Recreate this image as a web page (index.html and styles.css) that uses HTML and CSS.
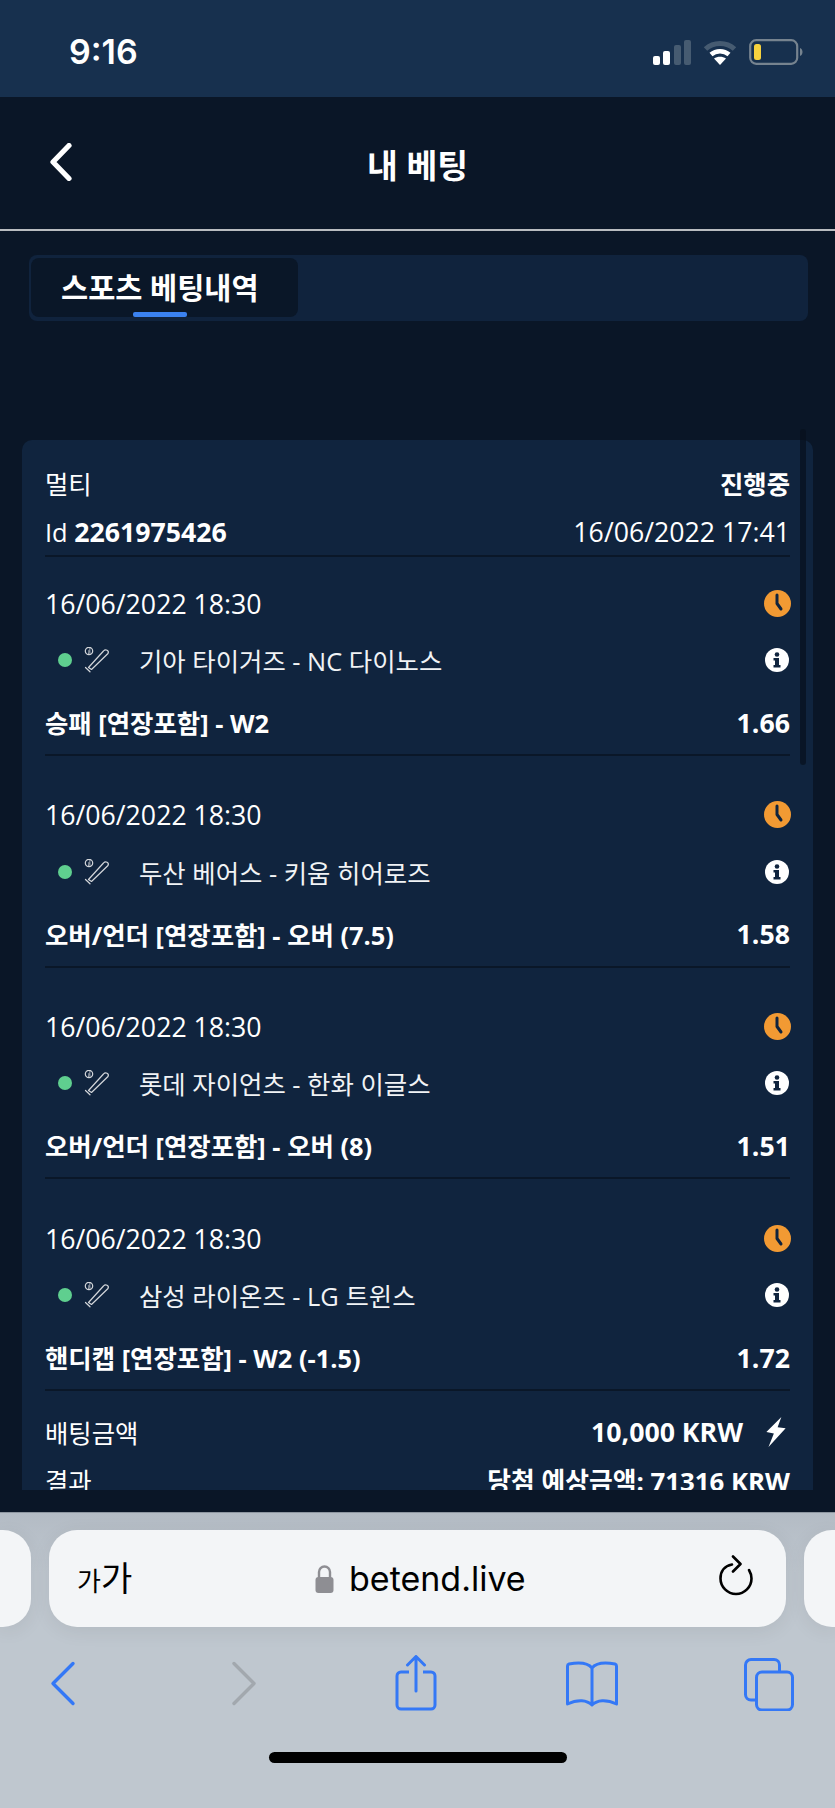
FILE: index.html
```html
<!DOCTYPE html>
<html lang="ko">
<head>
    <meta charset="UTF-8">
    <meta name="viewport" content="width=device-width, initial-scale=1.0">
    <title>내 베팅</title>
    <link rel="stylesheet" href="styles.css">
</head>
<body>
<div class="phone">

    <!-- Status bar -->
    <div class="status-bar">
        <span class="clock">9:16</span>
        <div class="status-icons">
            <svg class="signal" width="38" height="25" viewBox="0 0 38 25">
                <rect x="0" y="16" width="7" height="9" rx="2" fill="#fff"/>
                <rect x="10" y="11" width="7" height="14" rx="2" fill="#fff"/>
                <rect x="21" y="5" width="7" height="20" rx="2" fill="#465b71"/>
                <rect x="31" y="0" width="7" height="25" rx="2" fill="#465b71"/>
            </svg>
            <svg class="wifi" width="34" height="25" viewBox="0 0 34 25">
                <path d="M2.5 9 C10.5 1.5 23.5 1.5 31.5 9" fill="none" stroke="#465b71" stroke-width="5"/>
                <path d="M8 14.5 C13 10 21 10 26 14.5" fill="none" stroke="#fff" stroke-width="4.5"/>
                <path d="M17 25 L11 18.5 C14.5 16 19.5 16 23 18.5 Z" fill="#fff"/>
            </svg>
            <svg class="battery" width="54" height="26" viewBox="0 0 54 26">
                <rect x="1.2" y="1.2" width="47" height="23.6" rx="6" fill="none" stroke="#76838f" stroke-width="2.2"/>
                <rect x="5" y="5" width="7" height="16" rx="2.5" fill="#f7d23e"/>
                <path d="M51 9 C53 10 53.5 11.5 53.5 13 C53.5 14.5 53 16 51 17 Z" fill="#76838f"/>
            </svg>
        </div>
    </div>

    <!-- Header -->
    <div class="top-bar">
        <svg class="back-btn" width="24" height="38" viewBox="0 0 24 38">
            <path d="M20 2.5 L4 19 L20 35.5" fill="none" stroke="#fff" stroke-width="5.2" stroke-linecap="round" stroke-linejoin="round"/>
        </svg>
        <h1>내 베팅</h1>
    </div>

    <div class="content">
        <div class="tabs">
            <div class="tab">스포츠 베팅내역</div>
        </div>

        <div class="scroll-area">
            <div class="scrollbar"></div>
            <div class="card">
                <div class="row">
                    <span>멀티</span>
                    <b>진행중</b>
                </div>
                <div class="row row-id">
                    <span>Id <b class="num">2261975426</b></span>
                    <span class="num">16/06/2022 17:41</span>
                </div>

                <div class="bet">
                    <div class="row">
                        <span class="num">16/06/2022 18:30</span>
                        <svg class="ico-clock" width="27" height="27" viewBox="0 0 27 27"><circle cx="13.5" cy="13.5" r="13.5" fill="#f29a33"/><path d="M13 5 L13 13.5 L17 19" fill="none" stroke="#10243e" stroke-width="3" stroke-linecap="round" stroke-linejoin="round"/></svg>
                    </div>
                    <div class="row row-team">
                        <span class="dot"></span>
                        <svg class="bat" width="27" height="26" viewBox="0 0 27 26"><circle cx="5" cy="4" r="3.7" fill="none" stroke="#d3d6da" stroke-width="1.2"/><path d="M4 4 C5 3 5 5 4.5 7 M6 1 C5.5 3 6 5 6 7" fill="none" stroke="#d3d6da" stroke-width=".8"/><path d="M4.5 20.5 L19.5 4 C21.5 1.5 25.5 3.5 24 6.5 L7.5 22.5 Z M1.5 20.5 L6 24.8" fill="none" stroke="#d3d6da" stroke-width="1.2" stroke-linejoin="round" stroke-linecap="round"/></svg>
                        <span class="team">기아 타이거즈 - NC 다이노스</span>
                        <svg class="ico-info" width="24" height="24" viewBox="0 0 24 24"><circle cx="12" cy="12" r="12" fill="#fff"/><circle cx="12" cy="6.5" r="2.3" fill="#10243e"/><path d="M8.5 10 H14 V17 H15.5 V19.5 H8.5 V17 H10 V12.5 H8.5 Z" fill="#10243e"/></svg>
                    </div>
                    <div class="row row-market">
                        <b>승패 [연장포함] - W2</b>
                        <b class="num">1.66</b>
                    </div>
                </div>

                <div class="bet">
                    <div class="row">
                        <span class="num">16/06/2022 18:30</span>
                        <svg class="ico-clock" width="27" height="27" viewBox="0 0 27 27"><circle cx="13.5" cy="13.5" r="13.5" fill="#f29a33"/><path d="M13 5 L13 13.5 L17 19" fill="none" stroke="#10243e" stroke-width="3" stroke-linecap="round" stroke-linejoin="round"/></svg>
                    </div>
                    <div class="row row-team">
                        <span class="dot"></span>
                        <svg class="bat" width="27" height="26" viewBox="0 0 27 26"><circle cx="5" cy="4" r="3.7" fill="none" stroke="#d3d6da" stroke-width="1.2"/><path d="M4 4 C5 3 5 5 4.5 7 M6 1 C5.5 3 6 5 6 7" fill="none" stroke="#d3d6da" stroke-width=".8"/><path d="M4.5 20.5 L19.5 4 C21.5 1.5 25.5 3.5 24 6.5 L7.5 22.5 Z M1.5 20.5 L6 24.8" fill="none" stroke="#d3d6da" stroke-width="1.2" stroke-linejoin="round" stroke-linecap="round"/></svg>
                        <span class="team">두산 베어스 - 키움 히어로즈</span>
                        <svg class="ico-info" width="24" height="24" viewBox="0 0 24 24"><circle cx="12" cy="12" r="12" fill="#fff"/><circle cx="12" cy="6.5" r="2.3" fill="#10243e"/><path d="M8.5 10 H14 V17 H15.5 V19.5 H8.5 V17 H10 V12.5 H8.5 Z" fill="#10243e"/></svg>
                    </div>
                    <div class="row row-market">
                        <b>오버/언더 [연장포함] - 오버 (7.5)</b>
                        <b class="num">1.58</b>
                    </div>
                </div>

                <div class="bet">
                    <div class="row">
                        <span class="num">16/06/2022 18:30</span>
                        <svg class="ico-clock" width="27" height="27" viewBox="0 0 27 27"><circle cx="13.5" cy="13.5" r="13.5" fill="#f29a33"/><path d="M13 5 L13 13.5 L17 19" fill="none" stroke="#10243e" stroke-width="3" stroke-linecap="round" stroke-linejoin="round"/></svg>
                    </div>
                    <div class="row row-team">
                        <span class="dot"></span>
                        <svg class="bat" width="27" height="26" viewBox="0 0 27 26"><circle cx="5" cy="4" r="3.7" fill="none" stroke="#d3d6da" stroke-width="1.2"/><path d="M4 4 C5 3 5 5 4.5 7 M6 1 C5.5 3 6 5 6 7" fill="none" stroke="#d3d6da" stroke-width=".8"/><path d="M4.5 20.5 L19.5 4 C21.5 1.5 25.5 3.5 24 6.5 L7.5 22.5 Z M1.5 20.5 L6 24.8" fill="none" stroke="#d3d6da" stroke-width="1.2" stroke-linejoin="round" stroke-linecap="round"/></svg>
                        <span class="team">롯데 자이언츠 - 한화 이글스</span>
                        <svg class="ico-info" width="24" height="24" viewBox="0 0 24 24"><circle cx="12" cy="12" r="12" fill="#fff"/><circle cx="12" cy="6.5" r="2.3" fill="#10243e"/><path d="M8.5 10 H14 V17 H15.5 V19.5 H8.5 V17 H10 V12.5 H8.5 Z" fill="#10243e"/></svg>
                    </div>
                    <div class="row row-market">
                        <b>오버/언더 [연장포함] - 오버 (8)</b>
                        <b class="num">1.51</b>
                    </div>
                </div>

                <div class="bet">
                    <div class="row">
                        <span class="num">16/06/2022 18:30</span>
                        <svg class="ico-clock" width="27" height="27" viewBox="0 0 27 27"><circle cx="13.5" cy="13.5" r="13.5" fill="#f29a33"/><path d="M13 5 L13 13.5 L17 19" fill="none" stroke="#10243e" stroke-width="3" stroke-linecap="round" stroke-linejoin="round"/></svg>
                    </div>
                    <div class="row row-team">
                        <span class="dot"></span>
                        <svg class="bat" width="27" height="26" viewBox="0 0 27 26"><circle cx="5" cy="4" r="3.7" fill="none" stroke="#d3d6da" stroke-width="1.2"/><path d="M4 4 C5 3 5 5 4.5 7 M6 1 C5.5 3 6 5 6 7" fill="none" stroke="#d3d6da" stroke-width=".8"/><path d="M4.5 20.5 L19.5 4 C21.5 1.5 25.5 3.5 24 6.5 L7.5 22.5 Z M1.5 20.5 L6 24.8" fill="none" stroke="#d3d6da" stroke-width="1.2" stroke-linejoin="round" stroke-linecap="round"/></svg>
                        <span class="team">삼성 라이온즈 - LG 트윈스</span>
                        <svg class="ico-info" width="24" height="24" viewBox="0 0 24 24"><circle cx="12" cy="12" r="12" fill="#fff"/><circle cx="12" cy="6.5" r="2.3" fill="#10243e"/><path d="M8.5 10 H14 V17 H15.5 V19.5 H8.5 V17 H10 V12.5 H8.5 Z" fill="#10243e"/></svg>
                    </div>
                    <div class="row row-market">
                        <b>핸디캡 [연장포함] - W2 (-1.5)</b>
                        <b class="num">1.72</b>
                    </div>
                </div>

                <div class="summary">
                    <div class="row">
                        <span>배팅금액</span>
                        <b class="stake num">10,000 KRW
                            <svg width="22" height="30" viewBox="0 0 20 28"><path d="M15 0 L1 14 L8 15.5 L3 28 L19 10.5 L11.5 9.5 Z" fill="#fff"/></svg>
                        </b>
                    </div>
                    <div class="row">
                        <span>결과</span>
                        <b class="payout">당첨 예상금액: 71316 KRW</b>
                    </div>
                </div>
            </div>
        </div>
    </div>

    <!-- Safari toolbar -->
    <div class="browser">
        <div class="url-row">
            <div class="url-side url-left"></div>
            <div class="url-bar">
                <span class="aa"><small>가</small>가</span>
                <span class="address">
                    <svg width="19" height="28" viewBox="0 0 19 28"><path d="M4 13 V7 a5.5 5.5 0 0 1 11 0 V13" fill="none" stroke="#8e8e93" stroke-width="2.4"/><rect x="0.5" y="12" width="18" height="16" rx="3" fill="#8e8e93"/></svg>
                    betend.live
                </span>
                <svg class="reload" width="34" height="41" viewBox="0 0 34 41"><path d="M13 9.5 C5 11 1.5 17 1.5 23.5 C1.5 32 8.5 39 17 39 C25.5 39 32.5 32 32.5 23.5 C32.5 20 31.5 17.5 30 15" fill="none" stroke="#000" stroke-width="2.6" stroke-linecap="round"/><path d="M14 1.5 L21.5 9 L14 16.5" fill="none" stroke="#000" stroke-width="2.6" stroke-linecap="round" stroke-linejoin="round"/></svg>
            </div>
            <div class="url-side url-right"></div>
        </div>
        <div class="toolbar">
            <svg width="50" height="56" viewBox="0 0 50 56"><path d="M34 8.5 L14 28.5 L34 48.5" fill="none" stroke="#3478f6" stroke-width="3.4" stroke-linecap="round" stroke-linejoin="round"/></svg>
            <svg width="50" height="56" viewBox="0 0 50 56"><path d="M19 8.5 L39 28.5 L19 48.5" fill="none" stroke="#a2a8ae" stroke-width="3.4" stroke-linecap="round" stroke-linejoin="round"/></svg>
            <svg width="50" height="56" viewBox="0 0 50 56"><path d="M18 17 H10 a4 4 0 0 0 -4 4 V50 a4 4 0 0 0 4 4 H40 a4 4 0 0 0 4 -4 V21 a4 4 0 0 0 -4 -4 H32" fill="none" stroke="#3478f6" stroke-width="3"/><path d="M25 36 V2 M16.5 10 L25 1.5 L33.5 10" fill="none" stroke="#3478f6" stroke-width="3" stroke-linecap="round" stroke-linejoin="round"/></svg>
            <svg width="52" height="56" viewBox="0 0 52 56"><path d="M26 13 C22 8 14 7 3 9 C1.8 9.3 1.5 10 1.5 11 V49 C12 44 21 45 26 50 C31 45 40 44 50.5 49 V11 C50.5 10 50.2 9.3 49 9 C38 7 30 8 26 13 Z M26 13 V50" fill="none" stroke="#3478f6" stroke-width="3" stroke-linejoin="round"/></svg>
            <svg width="50" height="56" viewBox="0 0 50 56"><rect x="12.5" y="17" width="36" height="38" rx="5.5" fill="none" stroke="#3478f6" stroke-width="3"/><path d="M12 45 H7 a5.5 5.5 0 0 1 -5.5 -5.5 V10 a5.5 5.5 0 0 1 5.5 -5.5 H30 a5.5 5.5 0 0 1 5.5 5.5 V17" fill="none" stroke="#3478f6" stroke-width="3"/></svg>
        </div>
        <div class="home-bar"></div>
    </div>
</div>
</body>
</html>
```

FILE: styles.css
```css
html, body {
    margin: 0;
    padding: 0;
}

body {
    font-family: "Open Sans", "Noto Sans CJK KR", sans-serif;
    background-color: #0a1627;
    color: #fff;
}

b {
    font-weight: 700;
}

.phone {
    width: 835px;
    height: 1808px;
    display: flex;
    flex-direction: column;
    overflow: hidden;
}

/* Status bar */
.status-bar {
    height: 97px;
    flex: none;
    display: flex;
    align-items: flex-start;
    justify-content: space-between;
    background-color: #17304e;
}

.clock {
    font-family: Inter, sans-serif;
    font-size: 34px;
    font-weight: 600;
    line-height: 40px;
    margin: 32px 0 0 69px;
}

.status-icons {
    display: flex;
    align-items: center;
    gap: 12px;
    margin: 39px 32px 0 0;
}

/* Header */
.top-bar {
    height: 132px;
    flex: none;
    display: flex;
    align-items: center;
    justify-content: center;
    position: relative;
    background-color: #0a1627;
    border-bottom: 2px solid #b9bcc0;
}

.top-bar h1 {
    margin: 0;
    font-size: 33.5px;
    font-weight: 700;
}

.back-btn {
    position: absolute;
    left: 49px;
    top: 46px;
}

.content {
    flex: 1;
    min-height: 0;
    display: flex;
    flex-direction: column;
    background-color: #0a1627;
    padding-bottom: 22px;
}

/* Tabs */
.tabs {
    height: 66px;
    margin: 24px 27px 0 29px;
    padding: 3px 0 4px 2px;
    box-sizing: border-box;
    background-color: #10233d;
    border-radius: 8px;
    flex: none;
}

.tab {
    width: 267px;
    height: 59px;
    box-sizing: border-box;
    padding-left: 30px;
    background-color: #0a1728;
    border-radius: 8px;
    font-size: 29.5px;
    font-weight: 700;
    line-height: 60px;
    position: relative;
}

.tab::after {
    content: "";
    position: absolute;
    left: 102px;
    bottom: 0;
    width: 54px;
    height: 5px;
    border-radius: 2px;
    background-color: #3b82f0;
}

/* Card list */
.scroll-area {
    flex: 1;
    min-height: 0;
    margin: 108px 22px 0;
    overflow: hidden;
    position: relative;
}

.scrollbar {
    position: absolute;
    left: 778px;
    top: 0;
    width: 6px;
    height: 336px;
    border-radius: 3px;
    background-color: rgba(7, 16, 28, .7);
}

.card {
    margin-top: 11px;
    background-color: #10243e;
    border-radius: 10px 10px 0 0;
    padding: 19px 23px 0;
    font-size: 25.4px;
}

.row {
    display: flex;
    align-items: center;
    justify-content: space-between;
    height: 48px;
}

.num {
    font-size: 26.7px;
}

.row-id {
    border-bottom: 2px solid #0a1728;
}

.bet {
    padding-top: 22px;
    margin-bottom: 12.7px;
}

.row-team {
    height: 66px;
    justify-content: flex-start;
}

.dot {
    width: 14px;
    height: 14px;
    margin-left: 13px;
    border-radius: 50%;
    background-color: #5fcf8f;
}

.bat {
    margin-left: 12px;
}

.team {
    margin-left: 28px;
    flex: 1;
    color: #f1f3f5;
}

.ico-clock {
    margin-right: -1px;
}

.ico-info {
    margin-right: 1px;
}

.row-market {
    height: 58px;
    padding-bottom: 3px;
    border-bottom: 2px solid #0a1728;
}

.summary {
    padding-top: 4px;
}

.stake {
    display: flex;
    align-items: center;
    gap: 22px;
}

.stake svg {
    margin-right: 3px;
}

.payout {
    font-size: 25.8px;
}

/* Browser chrome */
.browser {
    height: 296px;
    flex: none;
    background: linear-gradient(#b3bbc4, #bfc7cf 60px);
    border-top: 1px solid #8d96a0;
    box-sizing: border-box;
    color: #000;
    font-family: Inter, "Noto Sans CJK KR", sans-serif;
}

.url-row {
    display: flex;
    gap: 18px;
    height: 97px;
    margin-top: 17px;
}

.url-side {
    width: 31px;
    background-color: #f3f5f7;
    box-shadow: 0 4px 20px rgba(0, 0, 0, .07);
}

.url-left {
    border-radius: 0 28px 28px 0;
}

.url-right {
    border-radius: 28px 0 0 28px;
}

.url-bar {
    width: 737px;
    flex: none;
    display: flex;
    align-items: center;
    position: relative;
    background-color: #f3f5f7;
    border-radius: 28px;
    box-shadow: 0 4px 20px rgba(0, 0, 0, .07);
}

.aa {
    margin-left: 28px;
    font-size: 34px;
    line-height: 1;
}

.aa small {
    font-size: 26px;
}

.address {
    position: absolute;
    left: 266px;
    display: flex;
    align-items: center;
    gap: 15px;
    font-size: 34px;
    font-weight: 400;
}

.reload {
    position: absolute;
    right: 33px;
    top: 25px;
}

.toolbar {
    display: flex;
    justify-content: space-between;
    align-items: center;
    padding: 0 41px 0 39px;
    height: 56px;
    margin-top: 28px;
}

.home-bar {
    width: 298px;
    height: 11px;
    margin: 41px auto 0;
    border-radius: 6px;
    background-color: #000;
}
```
